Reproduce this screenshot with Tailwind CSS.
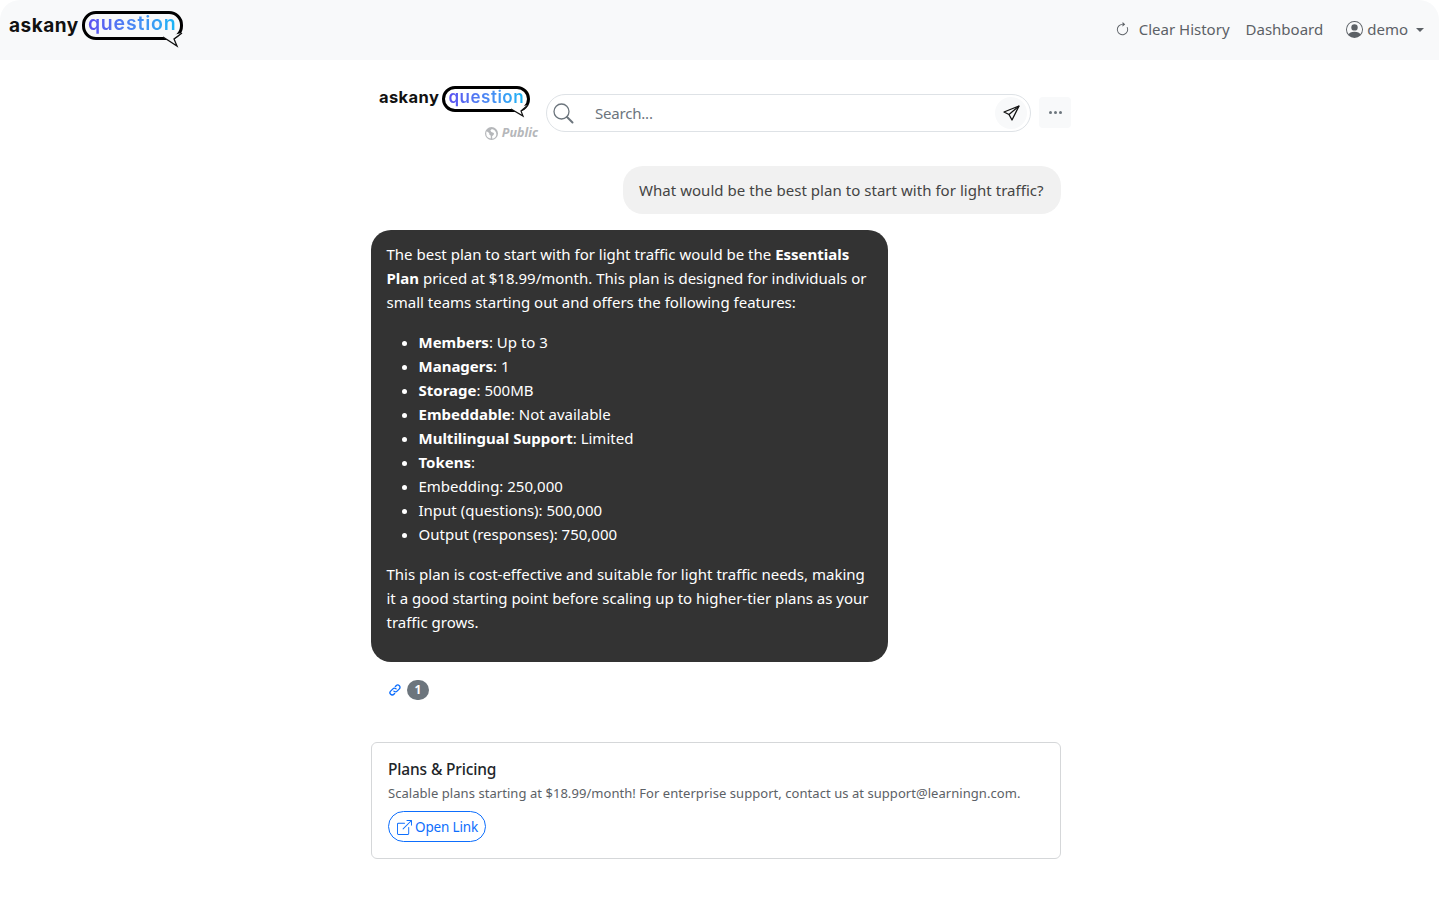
<!DOCTYPE html>
<html lang="en">
<head>
    <meta charset="UTF-8">
    <title>askanyquestion</title>
    <script src="https://cdn.jsdelivr.net/npm/@tailwindcss/browser@4"></script>
</head>
<body class="bg-white font-['Noto_Sans',sans-serif] text-[15px] text-[#212529] overflow-hidden">
    <div class="w-[1439px] h-[920px]">
        <!-- Navigation -->
        <nav class="h-[60px] bg-[#f8f9fa] rounded-t-[20px] flex items-center justify-between pl-[9px] pr-[15px]">
            <div class="flex items-center h-[50px] -mt-[10px]">
                <span class="font-['Inter',sans-serif] font-bold text-[19px] leading-none text-[#111] tracking-[0.5px]">askany</span>
                <div class="relative ml-[3px]">
                    <div class="w-[101px] h-[29px] border-[3px] border-black rounded-[14px] flex items-center justify-center">
                        <span class="font-['Inter',sans-serif] font-semibold text-[19.500px] leading-none tracking-[0.8px] bg-gradient-to-r from-[#5b4ff0] to-[#12b5f5] bg-clip-text text-transparent pb-[3px]">question</span>
                    </div>
                    <svg class="absolute left-[78px] top-[21px]" width="24" height="16" viewBox="0 0 24 16" fill="none"><path d="M3 5L17 14L14 7L22 1" stroke="#111" stroke-width="1.300" fill="#f8f9fa"/></svg>
                </div>
            </div>
            <div class="flex items-center text-[#5c6166] mt-[-1px]">
                <svg class="mr-[9px]" width="15" height="15" viewBox="0 0 16 16" fill="#5c6166"><path fill-rule="evenodd" d="M8 3a5 5 0 1 0 4.546 2.914.5.500 0 0 1 .908-.417A6 6 0 1 1 8 2v1z"/><path d="M8 4.466V.534a.25.25 0 0 1 .41-.192l2.36 1.966c.12.100.12.284 0 .384L8.410 4.658A.25.25 0 0 1 8 4.466z"/></svg>
                <span>Clear History</span>
                <span class="ml-[16px]">Dashboard</span>
                <svg class="ml-[23px] mr-[4px]" width="17" height="17" viewBox="0 0 16 16" fill="#5c6166"><path d="M11 6a3 3 0 1 1-6 0 3 3 0 0 1 6 0z"/><path fill-rule="evenodd" d="M0 8a8 8 0 1 1 16 0A8 8 0 0 1 0 8zm8-7a7 7 0 0 0-5.468 11.370C3.242 11.226 4.805 10 8 10s4.757 1.225 5.468 2.370A7 7 0 0 0 8 1z"/></svg>
                <span>demo</span>
                <span class="ml-[8px] w-0 h-0 border-x-[4px] border-x-transparent border-t-[4px] border-t-[#5c6166]"></span>
            </div>
        </nav>

        <main class="w-[690px] ml-[371px]">
            <!-- Search row -->
            <div class="flex items-start h-[106px]">
                <div class="w-[175px] shrink-0 pt-[26px] pl-[8px] pr-[8px]">
                    <div class="flex items-start h-[26px]">
                        <span class="font-['Inter',sans-serif] font-bold text-[16.500px] leading-none text-[#111] tracking-[0.4px] mt-[3px]">askany</span>
                        <div class="relative ml-[3px]">
                            <div class="w-[88px] h-[26px] border-[3px] border-black rounded-[13px] flex items-center justify-center">
                                <span class="font-['Inter',sans-serif] font-semibold text-[17px] leading-none tracking-[0.5px] bg-gradient-to-r from-[#5b4ff0] to-[#12b5f5] bg-clip-text text-transparent pb-[3px]">question</span>
                            </div>
                            <svg class="absolute left-[66px] top-[18px]" width="22" height="14" viewBox="0 0 22 14" fill="none"><path d="M3 5L15 12L13 7L20 1" stroke="#111" stroke-width="1.200" fill="#fff"/></svg>
                        </div>
                    </div>
                    <div class="flex items-center justify-end mt-[15px] text-[#b5b7ba] text-[12.500px] font-bold italic leading-none">
                        <svg class="mr-[4px]" width="13" height="13" viewBox="0 0 16 16" fill="#b5b7ba"><path d="M8 0a8 8 0 1 0 0 16A8 8 0 0 0 8 0zM1.500 8c0-1 .2-1.900.6-2.700l3 2.200.4 2 1.500 1 .2 3.800A6.500 6.500 0 0 1 1.500 8zm7.500 6.400-.3-3 2-1.900.3-2.200-3.200-1-1.200-2 1.400-1.600h1.700a6.500 6.500 0 0 1 3.200 9.600A6.500 6.500 0 0 1 9 14.400z"/></svg>
                        <span>Public</span>
                    </div>
                </div>
                <div class="mt-[34px] w-[485px] shrink-0 h-[38px] border border-[#dee2e6] rounded-[19px] flex items-center pl-[5px] pr-[3px]">
                    <svg width="22" height="22" viewBox="0 0 22 22" fill="none" stroke="#6c757d"><circle cx="9.500" cy="9.500" r="7.500" stroke-width="1.300"/><path d="M15 15l5.500 5.500" stroke-width="2" stroke-linecap="round"/></svg>
                    <span class="ml-[21px] flex-1 text-[#6c757d] tracking-[-0.2px]">Search...</span>
                    <div class="w-[32px] h-[32px] rounded-full bg-[#f8f9fa] flex items-center justify-center">
                        <svg width="17" height="17" viewBox="0 0 17 17" fill="none" stroke="#111" stroke-width="1.300" stroke-linejoin="round"><path d="M16 1L1 7l5 2.500L9 15z"/><path d="M16 1L6 9.500"/></svg>
                    </div>
                </div>
                <div class="ml-[8px] mt-[37px] w-[32px] h-[31px] shrink-0 rounded-[4px] bg-[#f8f9fa] flex items-center justify-center gap-[2px]">
                    <span class="w-[3px] h-[3px] rounded-full bg-[#6c757d]"></span>
                    <span class="w-[3px] h-[3px] rounded-full bg-[#6c757d]"></span>
                    <span class="w-[3px] h-[3px] rounded-full bg-[#6c757d]"></span>
                </div>
            </div>

            <!-- Question -->
            <div class="flex justify-end">
                <div class="bg-[#f1f1f1] rounded-[20px] h-[48px] w-[438px] pl-[16px] flex items-center text-[#444] tracking-[0.04px]">What would be the best plan to start with for light traffic?</div>
            </div>

            <!-- Answer -->
            <div class="mt-[16px] w-[517px] h-[432px] bg-[#333333] rounded-[20px] text-white leading-[24px] pl-[15.500px] pr-[15px] pt-[12px]">
                <p>The best plan to start with for light traffic would be the <b>Essentials Plan</b> priced at $18.99/month. This plan is designed for individuals or small teams starting out and offers the following features:</p>
                <ul class="list-disc pl-[32px] my-[16px]">
                    <li><b>Members</b>: Up to 3</li>
                    <li><b>Managers</b>: 1</li>
                    <li><b>Storage</b>: 500MB</li>
                    <li><b>Embeddable</b>: Not available</li>
                    <li><b>Multilingual Support</b>: Limited</li>
                    <li><b>Tokens</b>:</li>
                    <li>Embedding: 250,000</li>
                    <li>Input (questions): 500,000</li>
                    <li>Output (responses): 750,000</li>
                </ul>
                <p>This plan is cost-effective and suitable for light traffic needs, making it a good starting point before scaling up to higher-tier plans as your traffic grows.</p>
            </div>

            <!-- Sources -->
            <div class="flex items-center h-[22px] mt-[17px] pl-[18px]">
                <svg width="12" height="12" viewBox="0 0 16 16" fill="none" stroke="#0d6efd" stroke-width="1.800" stroke-linecap="round"><path d="M6.500 9.500a3 3 0 0 0 4.300 0l3-3a3 3 0 0 0-4.300-4.300L8.500 3.200"/><path d="M9.500 6.500a3 3 0 0 0-4.300 0l-3 3a3 3 0 0 0 4.300 4.300l1-1"/></svg>
                <span class="ml-[6px] w-[22px] h-[20px] rounded-full bg-[#6c757d] text-white text-[12px] font-bold flex items-center justify-center">1</span>
            </div>

            <!-- Source card -->
            <div class="mt-[41px] h-[117px] border border-[#d5d7d9] rounded-[6px] pl-[16px] pt-[15px]">
                <div class="text-[15.500px] font-medium leading-[22px] text-[#212529] tracking-[-0.15px]">Plans &amp; Pricing</div>
                <div class="text-[13px] leading-[20px] mt-[3px] text-[#5c6166] tracking-[0.05px]">Scalable plans starting at $18.99/month! For enterprise support, contact us at support@learningn.com.</div>
                <div class="mt-[8px] inline-flex items-center h-[31px] w-[98px] border border-[#0d6efd] rounded-[16px] pl-[8px] pt-[1px] text-[#0d6efd] text-[13.500px] tracking-[-0.15px]">
                    <svg class="mr-[3px]" width="15" height="15" viewBox="0 0 16 16" fill="#0d6efd"><path fill-rule="evenodd" d="M8.636 3.500a.5.500 0 0 0-.5-.5H1.500A1.500 1.500 0 0 0 0 4.500v10A1.500 1.500 0 0 0 1.500 16h10a1.500 1.500 0 0 0 1.500-1.500V7.864a.5.500 0 0 0-1 0V14.500a.5.500 0 0 1-.5.500h-10a.5.500 0 0 1-.5-.5v-10a.5.500 0 0 1 .5-.5h6.636a.5.500 0 0 0 .5-.5z"/><path fill-rule="evenodd" d="M16 .5a.5.500 0 0 0-.5-.5h-5a.5.500 0 0 0 0 1h3.793L6.146 9.146a.5.500 0 1 0 .708.708L15 1.707V5.500a.5.500 0 0 0 1 0v-5z"/></svg>
                    Open Link
                </div>
            </div>
        </main>
    </div>
</body>
</html>
